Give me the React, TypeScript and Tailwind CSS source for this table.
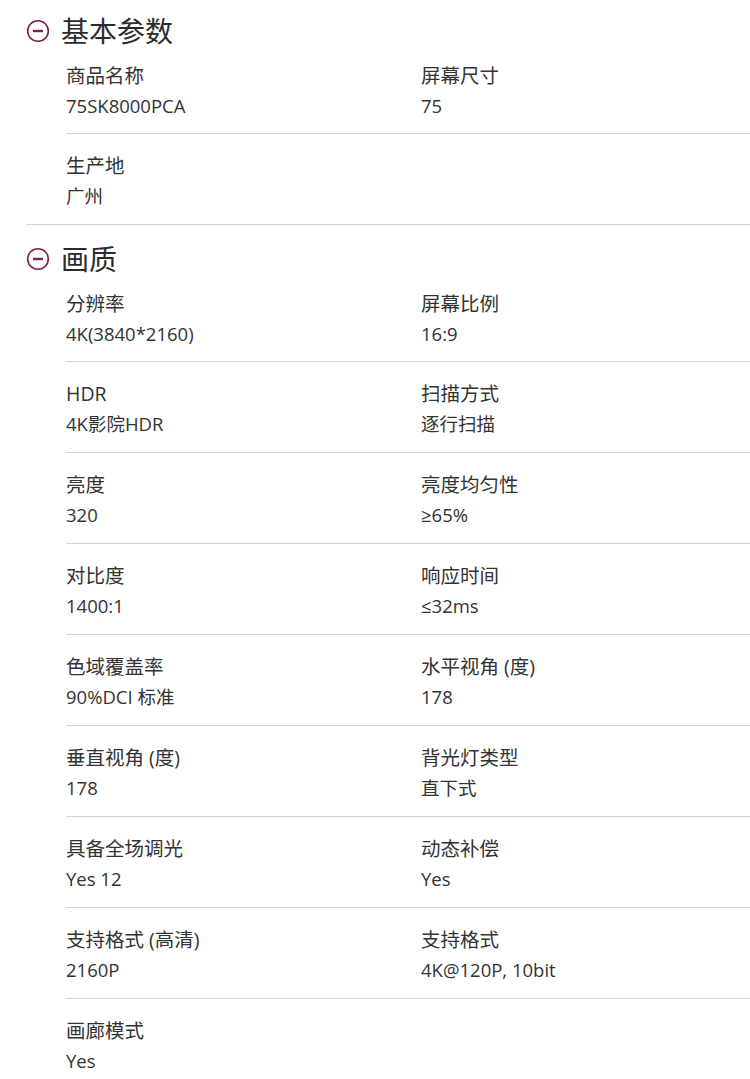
import React from "react";

type Item = { label: string; value: string };
type Section = { title: string; rows: Item[][] };

const sections: Section[] = [
  {
    title: "基本参数",
    rows: [
      [
        { label: "商品名称", value: "75SK8000PCA" },
        { label: "屏幕尺寸", value: "75" },
      ],
      [{ label: "生产地", value: "广州" }],
    ],
  },
  {
    title: "画质",
    rows: [
      [
        { label: "分辨率", value: "4K(3840*2160)" },
        { label: "屏幕比例", value: "16:9" },
      ],
      [
        { label: "HDR", value: "4K影院HDR" },
        { label: "扫描方式", value: "逐行扫描" },
      ],
      [
        { label: "亮度", value: "320" },
        { label: "亮度均匀性", value: "≥65%" },
      ],
      [
        { label: "对比度", value: "1400:1" },
        { label: "响应时间", value: "≤32ms" },
      ],
      [
        { label: "色域覆盖率", value: "90%DCI 标准" },
        { label: "水平视角 (度)", value: "178" },
      ],
      [
        { label: "垂直视角 (度)", value: "178" },
        { label: "背光灯类型", value: "直下式" },
      ],
      [
        { label: "具备全场调光", value: "Yes 12" },
        { label: "动态补偿", value: "Yes" },
      ],
      [
        { label: "支持格式 (高清)", value: "2160P" },
        { label: "支持格式", value: "4K@120P, 10bit" },
      ],
      [{ label: "画廊模式", value: "Yes" }],
    ],
  },
];

function MinusCircle() {
  return (
    <svg width="24" height="24" viewBox="0 0 24 24" className="shrink-0">
      <circle cx="12" cy="12" r="10.3" fill="none" stroke="#7a1f4c" strokeWidth="1.6" />
      <line x1="7" y1="12" x2="17" y2="12" stroke="#7a1f4c" strokeWidth="2.4" />
    </svg>
  );
}

function Row({ row, first, last }: { row: Item[]; first: boolean; last: boolean }) {
  return (
    <div
      className={`grid grid-cols-[355px_1fr] ${first ? "pt-[10px] pb-[12px]" : "pt-[17px] pb-[13px]"} ${
        last ? "" : "border-b border-[#d4d4d4]"
      }`}
    >
      {row.map((it, ii) => (
        <div key={ii} className="flex flex-col">
          <span className="text-[19.5px] leading-[30px] text-[#333]">{it.label}</span>
          <span className="text-[18.5px] leading-[30px] text-[#333]">{it.value}</span>
        </div>
      ))}
    </div>
  );
}

export default function App() {
  return (
    <div
      className="w-[750px] bg-white text-[#333]"
      style={{ fontFamily: '"Open Sans", "Noto Sans CJK SC", sans-serif' }}
    >
      {sections.map((s, si) => (
        <div
          key={si}
          className={si > 0 ? "ml-[26px] border-t border-[#d4d4d4] pt-[14px]" : "ml-[26px] pt-[11px]"}
        >
          <div className="flex items-center gap-[11px] h-[40px]">
            <MinusCircle />
            <span className="text-[28px] leading-[40px] text-[#2b2b2b]">{s.title}</span>
          </div>
          <div className="ml-[40px]">
            {s.rows.map((row, ri) => (
              <Row key={ri} row={row} first={ri === 0} last={ri === s.rows.length - 1} />
            ))}
          </div>
        </div>
      ))}
    </div>
  );
}
